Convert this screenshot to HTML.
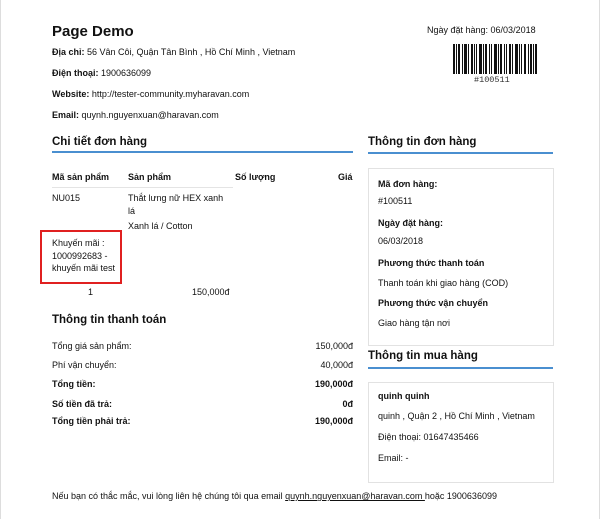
<!DOCTYPE html><html><head><meta charset="utf-8"><style>
body{margin:0;width:600px;height:519px;background:#fff;font-family:"Liberation Sans",Arial,sans-serif;color:#111;position:relative;overflow:hidden}
.a{position:absolute;white-space:nowrap;font-size:9px;line-height:11px}
.b{font-weight:bold}
.h{position:absolute;font-weight:bold;font-size:11.5px;white-space:nowrap}
.ln{position:absolute;height:2px;background:#4a8fd0}
.box{position:absolute;border:1px solid #e2e2e2}
.r{text-align:right}
</style></head><body>
<div style="position:absolute;left:0;top:0;width:1px;height:519px;background:#ddd"></div>
<div style="position:absolute;right:0;top:0;width:1px;height:519px;background:#ddd"></div>
<div class="h" style="left:52px;top:23px;font-size:15px">Page Demo</div>
<div class="a" style="left:52px;top:47px"><b>Địa chỉ:</b> 56 Vân Côi, Quận Tân Bình , Hồ Chí Minh , Vietnam</div>
<div class="a" style="left:52px;top:68px"><b>Điện thoại:</b> 1900636099</div>
<div class="a" style="left:52px;top:89px"><b>Website:</b> http://tester-community.myharavan.com</div>
<div class="a" style="left:52px;top:110px"><b>Email:</b> quynh.nguyenxuan@haravan.com</div>
<div class="a" style="left:427px;top:25px">Ngày đặt hàng: 06/03/2018</div>
<svg style="position:absolute;left:453px;top:44px" width="84" height="30">
<g fill="#111">
<rect x="0" width="2" height="30"/><rect x="3" width="1" height="30"/><rect x="5" width="2" height="30"/><rect x="9" width="1" height="30"/><rect x="11" width="3" height="30"/><rect x="15" width="1" height="30"/><rect x="18" width="2" height="30"/><rect x="21" width="1" height="30"/><rect x="23" width="1" height="30"/><rect x="26" width="3" height="30"/><rect x="30" width="1" height="30"/><rect x="32" width="2" height="30"/><rect x="36" width="1" height="30"/><rect x="38" width="1" height="30"/><rect x="41" width="3" height="30"/><rect x="45" width="1" height="30"/><rect x="47" width="2" height="30"/><rect x="51" width="1" height="30"/><rect x="53" width="1" height="30"/><rect x="56" width="2" height="30"/><rect x="59" width="1" height="30"/><rect x="62" width="3" height="30"/><rect x="66" width="1" height="30"/><rect x="68" width="1" height="30"/><rect x="71" width="2" height="30"/><rect x="75" width="1" height="30"/><rect x="77" width="2" height="30"/><rect x="80" width="1" height="30"/><rect x="82" width="2" height="30"/>
</g></svg>
<div class="a" style="left:474px;top:75px;font-family:'Liberation Mono',monospace;font-size:8.5px;color:#333">#100511</div>
<div class="h" style="left:52px;top:136px">Chi tiết đơn hàng</div>
<div class="ln" style="left:52px;top:151px;width:301px"></div>
<div class="a b" style="left:52px;top:172px">Mã sản phẩm</div>
<div class="a b" style="left:128px;top:172px">Sản phẩm</div>
<div class="a b" style="left:235px;top:172px">Số lượng</div>
<div class="a b" style="left:338px;top:172px">Giá</div>
<div style="position:absolute;left:52px;top:187px;width:181px;height:1px;background:#e4e4e4"></div>
<div class="a" style="left:52px;top:193px">NU015</div>
<div class="a" style="left:128px;top:193px">Thắt lưng nữ HEX xanh</div>
<div class="a" style="left:128px;top:206px">lá</div>
<div class="a" style="left:128px;top:221px">Xanh lá / Cotton</div>
<div style="position:absolute;left:40px;top:230px;width:78px;height:50px;border:2px solid #e02020"></div>
<div class="a" style="left:52px;top:237px;line-height:12.5px">Khuyến mãi :<br>1000992683 -<br>khuyến mãi test</div>
<div class="a" style="left:88px;top:287px">1</div>
<div class="a" style="left:192px;top:287px">150,000đ</div>
<div class="h" style="left:52px;top:314px">Thông tin thanh toán</div>
<div class="a" style="left:52px;top:341px">Tổng giá sản phẩm:</div><div class="a r" style="right:247px;top:341px">150,000đ</div>
<div class="a" style="left:52px;top:360px">Phí vận chuyển:</div><div class="a r" style="right:247px;top:360px">40,000đ</div>
<div class="a b" style="left:52px;top:379px">Tổng tiền:</div><div class="a b r" style="right:247px;top:379px">190,000đ</div>
<div class="a b" style="left:52px;top:399px">Số tiền đã trả:</div><div class="a b r" style="right:247px;top:399px">0đ</div>
<div class="a b" style="left:52px;top:416px">Tổng tiền phải trả:</div><div class="a b r" style="right:247px;top:416px">190,000đ</div>
<div class="h" style="left:368px;top:136px">Thông tin đơn hàng</div>
<div class="ln" style="left:368px;top:152px;width:185px"></div>
<div class="box" style="left:368px;top:168px;width:184px;height:176px"></div>
<div class="a b" style="left:378px;top:179px">Mã đơn hàng:</div>
<div class="a" style="left:378px;top:196px">#100511</div>
<div class="a b" style="left:378px;top:218px">Ngày đặt hàng:</div>
<div class="a" style="left:378px;top:236px">06/03/2018</div>
<div class="a b" style="left:378px;top:258px">Phương thức thanh toán</div>
<div class="a" style="left:378px;top:278px">Thanh toán khi giao hàng (COD)</div>
<div class="a b" style="left:378px;top:298px">Phương thức vận chuyển</div>
<div class="a" style="left:378px;top:318px">Giao hàng tận nơi</div>
<div class="h" style="left:368px;top:350px">Thông tin mua hàng</div>
<div class="ln" style="left:368px;top:367px;width:185px"></div>
<div class="box" style="left:368px;top:382px;width:184px;height:99px"></div>
<div class="a b" style="left:378px;top:391px">quinh quinh</div>
<div class="a" style="left:378px;top:411px">quinh , Quận 2 , Hồ Chí Minh , Vietnam</div>
<div class="a" style="left:378px;top:432px">Điện thoại: 01647435466</div>
<div class="a" style="left:378px;top:453px">Email: -</div>
<div class="a" style="left:52px;top:491px">Nếu bạn có thắc mắc, vui lòng liên hệ chúng tôi qua email <u>quynh.nguyenxuan@haravan.com </u>hoặc 1900636099</div>
</body></html>
